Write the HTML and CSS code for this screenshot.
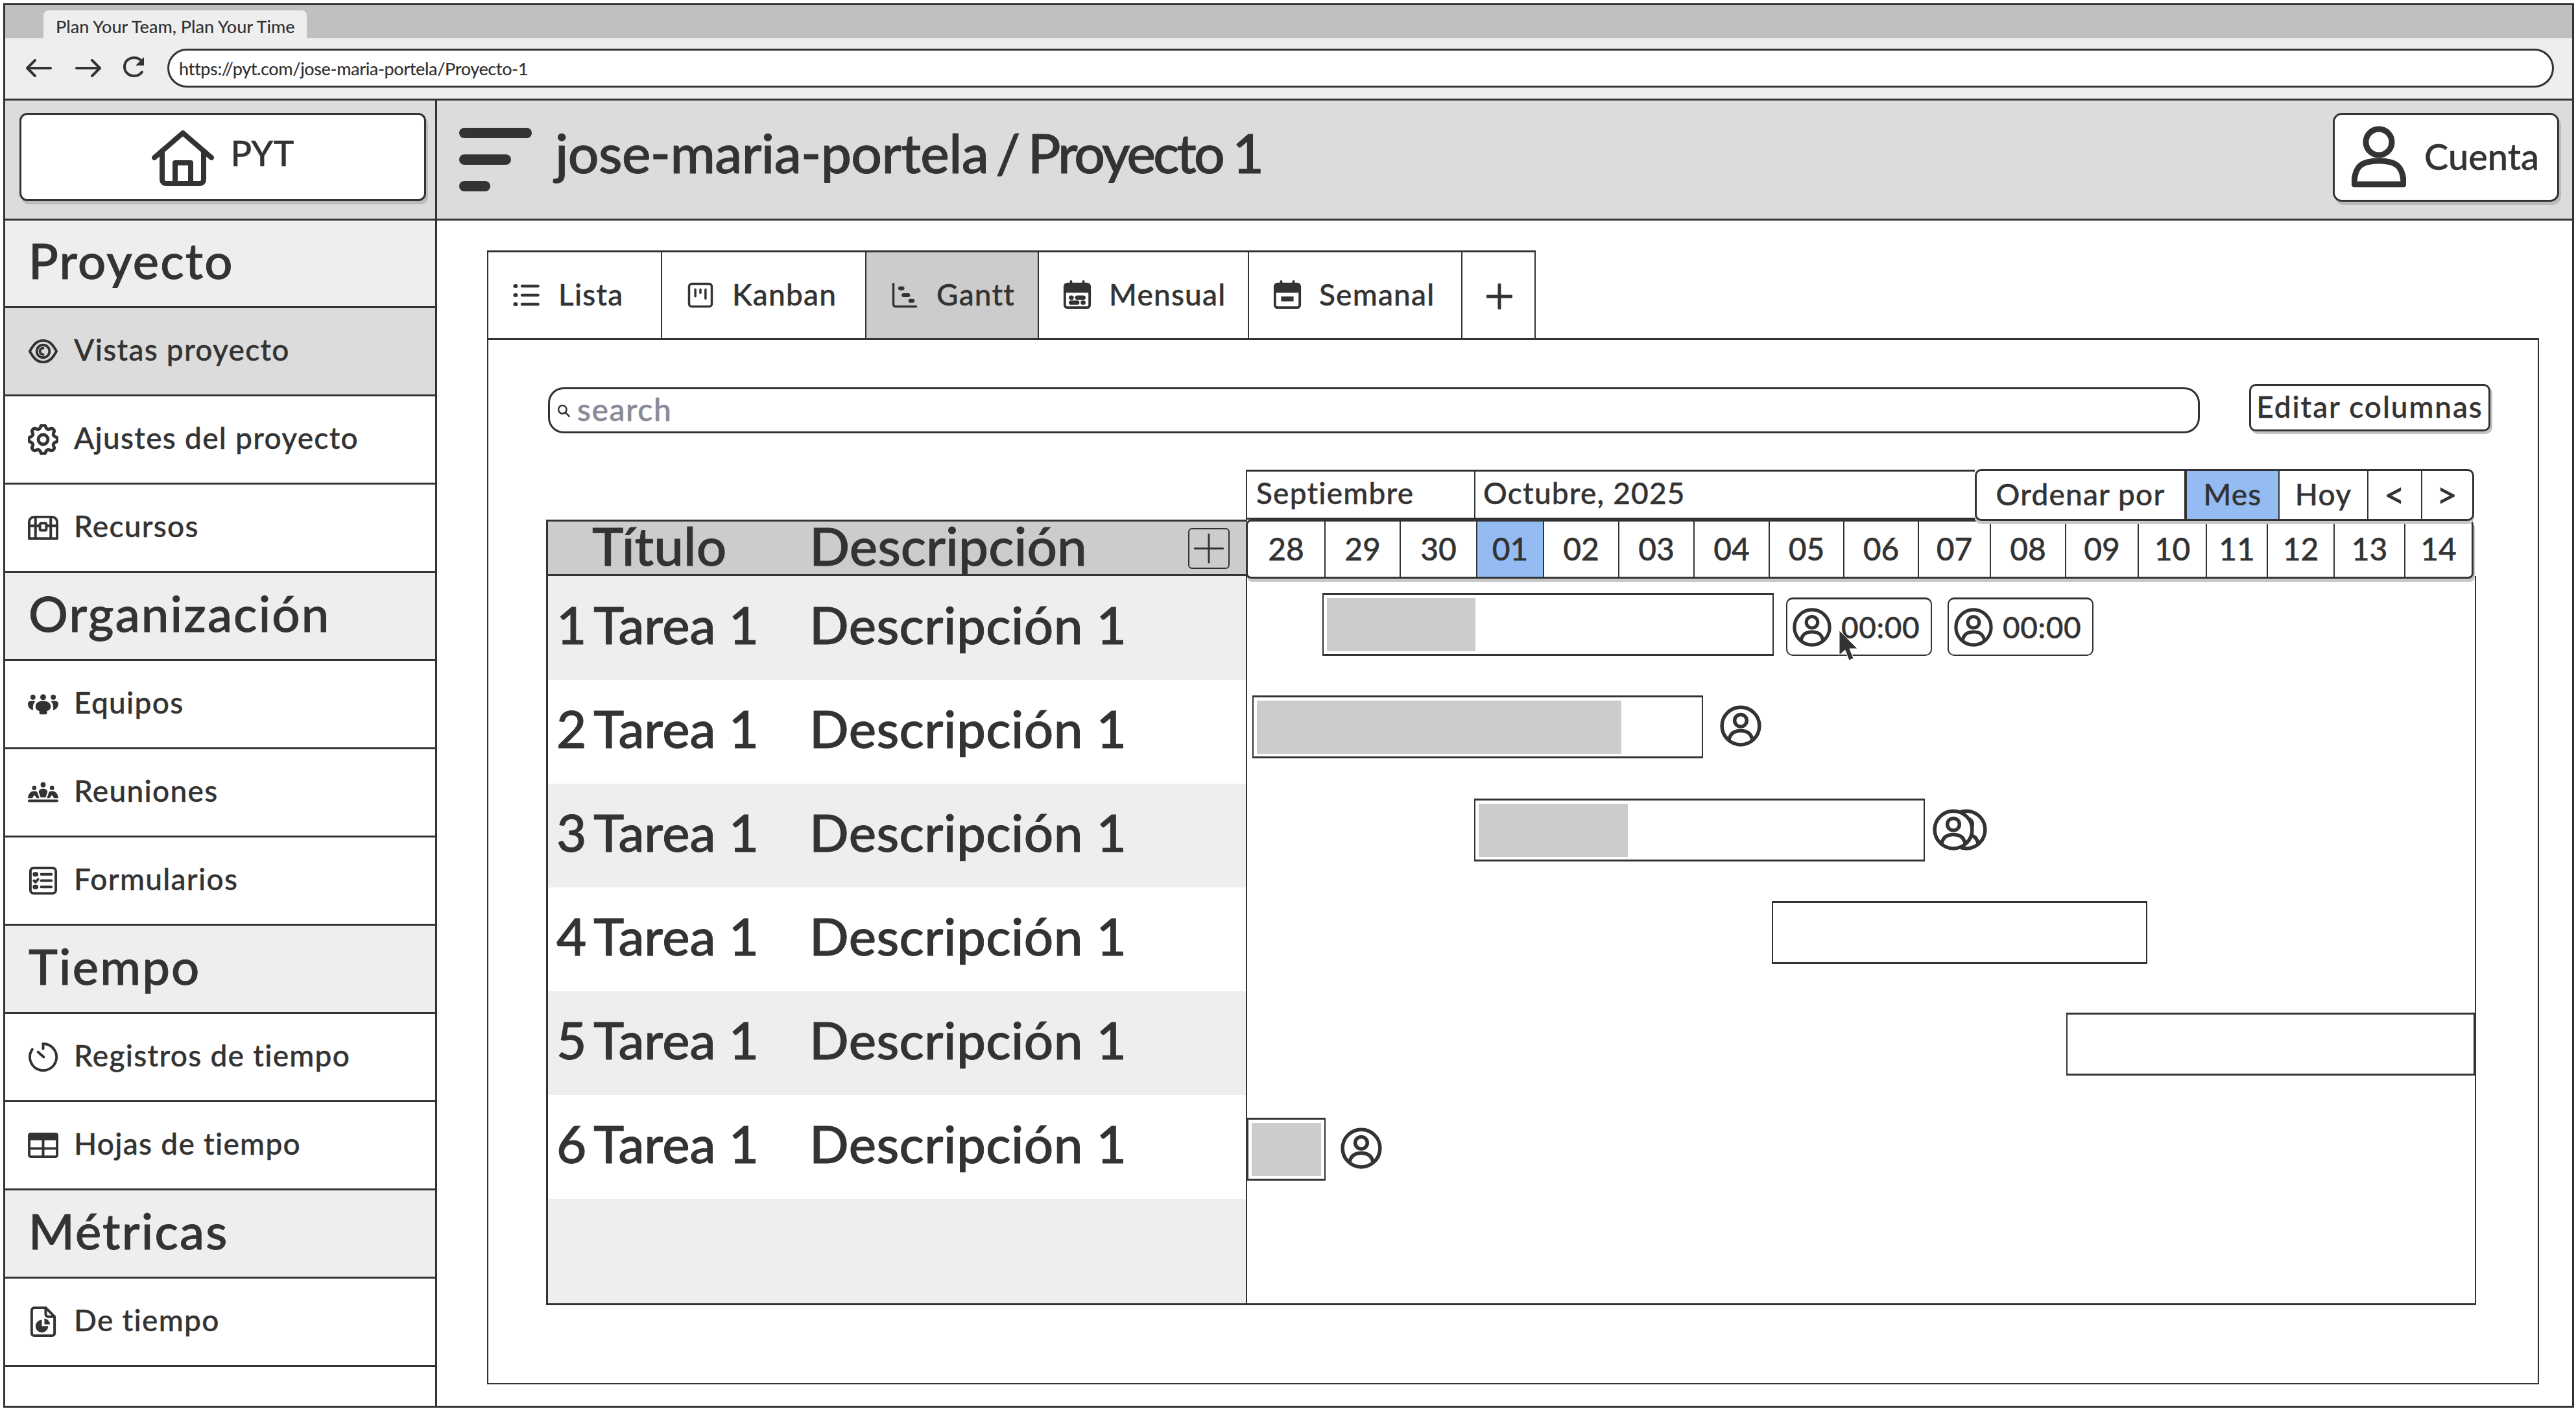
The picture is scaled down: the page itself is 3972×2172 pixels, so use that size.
FILE: index.html
```html
<!DOCTYPE html>
<html lang="es">
<head>
<meta charset="utf-8">
<title>Plan Your Team, Plan Your Time</title>
<link rel="stylesheet" href="styles.css">
</head>
<body>
<svg class="defs" width="0" height="0" aria-hidden="true">
  <symbol id="i-eye" viewBox="0 0 24 24"><path d="M1.5 12C5 5.5 8 3.5 12 3.5s7 2 10.500 8.500c-3.500 6.500-6.500 8.500-10.500 8.500S5 18.500 1.500 12z"/><circle cx="12" cy="12" r="5"/><path d="M12 9.500a2.500 2.500 0 0 0 0 5"/></symbol>
  <symbol id="i-gear" viewBox="2.500 2.500 19 19"><path d="M10.325 4.317c.426-1.756 2.924-1.756 3.35 0a1.724 1.724 0 0 0 2.573 1.066c1.543-.94 3.31.826 2.37 2.37a1.724 1.724 0 0 0 1.065 2.572c1.756.426 1.756 2.924 0 3.35a1.724 1.724 0 0 0-1.066 2.573c.94 1.543-.826 3.31-2.37 2.37a1.724 1.724 0 0 0-2.572 1.065c-.426 1.756-2.924 1.756-3.35 0a1.724 1.724 0 0 0-2.573-1.066c-1.543.94-3.31-.826-2.37-2.37a1.724 1.724 0 0 0-1.065-2.572c-1.756-.426-1.756-2.924 0-3.35a1.724 1.724 0 0 0 1.066-2.573c-.94-1.543.826-3.31 2.37-2.37.996.608 2.296.07 2.572-1.065z"/><circle cx="12" cy="12" r="3"/></symbol>
  <symbol id="i-chest" viewBox="0 0 24 19"><path d="M1 18V5a4 4 0 0 1 4-4h14a4 4 0 0 1 4 4v13zM1 8h8M15 8h8M6 1.500V18M18 1.500V18"/><rect x="9.500" y="6" width="5" height="5.500" rx="1"/></symbol>
  <symbol id="i-team" viewBox="0 0 24 16"><g class="solid"><circle cx="4" cy="2.500" r="2"/><circle cx="12" cy="2.500" r="2.300"/><circle cx="20" cy="2.500" r="2"/><path d="M0 7.500C0 6 1.500 5.500 3.500 5.500c1 0 1.800.2 2.300.5C4.500 7 4 8.500 4 11c0 .8.100 1.300.300 1.700C1.500 12.500 0 10 0 7.500zM24 7.500C24 6 22.500 5.500 20.500 5.500c-1 0-1.800.2-2.300.5 1.300 1 1.800 2.500 1.800 5 0 .8-.1 1.300-.3 1.700 2.800-.2 4.300-2.700 4.300-5.200zM6 10c0-3 2.500-4.500 6-4.500s6 1.500 6 4.500c0 2-1.500 3-3 3.300V15a1 1 0 0 1-1 1h-4a1 1 0 0 1-1-1v-1.700C7.500 13 6 12 6 10z"/></g></symbol>
  <symbol id="i-meet" viewBox="0 0 24 16"><g class="solid"><circle cx="12" cy="2" r="2"/><circle cx="5" cy="4.500" r="1.700"/><circle cx="19" cy="4.500" r="1.700"/><path d="M8.500 7.500C9 5.500 10.500 5 12 5s3 .5 3.500 2.500L14 12h-4zM0 12.500C.5 8.500 2.500 7 5 7c1 0 2 .3 2.500 1L9 12.500H7L5 10l-1.500 2.500zM24 12.500C23.500 8.500 21.500 7 19 7c-1 0-2 .3-2.500 1L15 12.500h2l2-2.500 1.500 2.500z"/><rect x="0" y="13.600" width="24" height="2" rx="1"/></g></symbol>
  <symbol id="i-form" viewBox="0 0 24 24"><rect x="2" y="2" width="20" height="20" rx="2.500"/><path d="M10.500 7h8M10.500 12h8M10.500 17h8"/><path d="M5.500 7h1M5.500 17h1" class="thick"/><path d="M4.800 12l1.200 1.200 2-2.200"/></symbol>
  <symbol id="i-timer" viewBox="0 0 24 24"><path d="M12 1.500a10.500 10.500 0 1 1-8.500 4.400"/><path d="M12 1.500v4M8 8l4.500 4"/></symbol>
  <symbol id="i-table" viewBox="0 0 24 20"><path class="solid" d="M2.500 0h19A2.500 2.500 0 0 1 24 2.500V6H0V2.500A2.500 2.500 0 0 1 2.500 0z"/><rect x="1" y="1" width="22" height="18" rx="1.500"/><path d="M1 12.500h22M12 5v14"/></symbol>
  <symbol id="i-doc" viewBox="0 0 20 24"><path d="M3 1h9l7 7v13a2 2 0 0 1-2 2H3a2 2 0 0 1-2-2V3a2 2 0 0 1 2-2z"/><path d="M12 1v5a2 2 0 0 0 2 2h5"/><path class="solid" d="M9 10.500v5h5a5 5 0 1 1-5-5zM11 9.500a5 5 0 0 1 4.500 4.500H11z"/></symbol>
  <symbol id="i-list" viewBox="0 0 24 24"><path class="thick" d="M2 4h.5M2 12h.5M2 20h.5"/><path class="mid" d="M8 4h14M8 12h14M8 20h14"/></symbol>
  <symbol id="i-kanban" viewBox="0 0 24 24"><rect x="2" y="2" width="20" height="20" rx="2.500"/><path d="M7.500 7v6M12 7v3M16.500 7v8"/></symbol>
  <symbol id="i-gantt" viewBox="0 0 24 24"><path d="M2 2v18a2 2 0 0 0 2 2h18"/><path class="thick" d="M8 6h2M11 12h4M17 17h2"/></symbol>
  <symbol id="i-month" viewBox="0 0 24 24"><path d="M7 1v4M17 1v4"/><path class="solid" d="M4 3h16a2 2 0 0 1 2 2v5H2V5a2 2 0 0 1 2-2z"/><rect x="2" y="3" width="20" height="19" rx="2"/><path class="thick" d="M7 14h.5M12 14h5M7 18h5M16.500 18h.5"/></symbol>
  <symbol id="i-week" viewBox="0 0 24 24"><path d="M7 1v4M17 1v4"/><path class="solid" d="M4 3h16a2 2 0 0 1 2 2v5H2V5a2 2 0 0 1 2-2zM7 13h10v4H7z"/><rect x="2" y="3" width="20" height="19" rx="2"/></symbol>
  <symbol id="i-user" viewBox="0 0 24 24"><circle class="white" cx="12" cy="12" r="10.500"/><circle cx="12" cy="9" r="3.400"/><path d="M5.500 19.500c.7-3.300 3-4.800 6.500-4.800s5.800 1.500 6.500 4.800"/></symbol>
  <symbol id="i-home" viewBox="0 0 96 86"><path class="w7" d="M4 42 48 4l44 38"/><path class="w7" d="M16 32v44a6 6 0 0 0 6 6h52a6 6 0 0 0 6-6V32"/><path class="w7" d="M36 82V50h24v32"/></symbol>
  <symbol id="i-account" viewBox="0 0 84 96"><ellipse class="w8" cx="42" cy="25" rx="20" ry="20"/><path class="w8" d="M4 90c0-30 14-36 38-36s38 6 38 36z"/></symbol>
</svg>

<div class="window">
  <div class="tabstrip"><div class="browser-tab">Plan Your Team, Plan Your Time</div></div>

  <div class="toolbar">
    <svg class="nav-ic" viewBox="0 0 40 28"><path d="M38 14H3M14 2 2 14l12 12"/></svg>
    <svg class="nav-ic" viewBox="0 0 40 28"><path d="M2 14h35M26 2l12 12-12 12"/></svg>
    <svg class="nav-ic nav-reload" viewBox="0 0 35 34"><path d="M29 8C26 4 22 3 18 3 9 3 3 9 3 17s6 14 15 14c5 0 9-2 12-6"/><path class="solid" d="M33 2v13H20z"/></svg>
    <div class="url">https://pyt.com/jose-maria-portela/Proyecto-1</div>
  </div>

  <header class="topbar">
    <div class="brand-cell">
      <div class="brand"><svg class="home-ic"><use href="#i-home"/></svg><span>PYT</span></div>
    </div>
    <div class="title-cell">
      <div class="burger"><i class="b1"></i><i class="b2"></i><i class="b3"></i></div>
      <h1><span class="crumb-a">jose-maria-portela</span> <span class="crumb-s">/</span> <span class="crumb-b">Proyecto 1</span></h1>
      <div class="account"><svg class="account-ic"><use href="#i-account"/></svg><span>Cuenta</span></div>
    </div>
  </header>

  <div class="body">
    <nav class="sidebar">
      <div class="sec sec-first">Proyecto</div>
      <div class="item active"><svg class="ic"><use href="#i-eye"/></svg>Vistas proyecto</div>
      <div class="item"><svg class="ic"><use href="#i-gear"/></svg>Ajustes del proyecto</div>
      <div class="item"><svg class="ic"><use href="#i-chest"/></svg>Recursos</div>
      <div class="sec">Organización</div>
      <div class="item"><svg class="ic"><use href="#i-team"/></svg>Equipos</div>
      <div class="item"><svg class="ic"><use href="#i-meet"/></svg>Reuniones</div>
      <div class="item"><svg class="ic"><use href="#i-form"/></svg>Formularios</div>
      <div class="sec">Tiempo</div>
      <div class="item"><svg class="ic"><use href="#i-timer"/></svg>Registros de tiempo</div>
      <div class="item"><svg class="ic"><use href="#i-table"/></svg>Hojas de tiempo</div>
      <div class="sec">Métricas</div>
      <div class="item"><svg class="ic"><use href="#i-doc"/></svg>De tiempo</div>
    </nav>

    <main class="content">
      <div class="panel">
        <div class="tabs">
          <div class="tab t-lista"><svg class="tab-ic"><use href="#i-list"/></svg>Lista</div>
          <div class="tab t-kanban"><svg class="tab-ic"><use href="#i-kanban"/></svg>Kanban</div>
          <div class="tab t-gantt on"><svg class="tab-ic"><use href="#i-gantt"/></svg>Gantt</div>
          <div class="tab t-mensual"><svg class="tab-ic tall"><use href="#i-month"/></svg>Mensual</div>
          <div class="tab t-semanal"><svg class="tab-ic tall"><use href="#i-week"/></svg>Semanal</div>
          <div class="tab t-plus"><svg class="plus-ic" viewBox="0 0 40 40"><path d="M20 2v36M2 20h36"/></svg></div>
        </div>

        <div class="panel-body">
          <div class="toolrow">
            <div class="search"><svg class="search-ic" viewBox="0 0 24 24"><circle cx="10" cy="10" r="7.500"/><path d="m15.500 15.500 7 7"/></svg><span>search</span></div>
            <div class="edit-btn">Editar columnas</div>
          </div>

          <div class="gantt">
            <div class="table">
              <div class="thead">
                <span class="c-title">Título</span><span class="c-desc">Descripción</span>
                <div class="add-col"><svg viewBox="0 0 30 30"><path d="M15 4v22M4 15h22"/></svg></div>
              </div>
              <div class="row alt"><span class="c-num">1</span><span class="c-title">Tarea 1</span><span class="c-desc">Descripción 1</span></div>
              <div class="row"><span class="c-num">2</span><span class="c-title">Tarea 1</span><span class="c-desc">Descripción 1</span></div>
              <div class="row alt"><span class="c-num">3</span><span class="c-title">Tarea 1</span><span class="c-desc">Descripción 1</span></div>
              <div class="row"><span class="c-num">4</span><span class="c-title">Tarea 1</span><span class="c-desc">Descripción 1</span></div>
              <div class="row alt"><span class="c-num">5</span><span class="c-title">Tarea 1</span><span class="c-desc">Descripción 1</span></div>
              <div class="row"><span class="c-num">6</span><span class="c-title">Tarea 1</span><span class="c-desc">Descripción 1</span></div>
              <div class="row alt last"></div>
            </div>

            <div class="timeline">
              <div class="months">
                <div class="m-sept">Septiembre</div>
                <div class="m-oct">Octubre, 2025</div>
                <div class="sorter">
                  <div class="s-order">Ordenar por</div>
                  <div class="s-mes">Mes</div>
                  <div class="s-hoy">Hoy</div>
                  <div class="s-prev">&lt;</div>
                  <div class="s-next">&gt;</div>
                </div>
              </div>
              <div class="days">
                <div>28</div><div>29</div><div>30</div><div class="today">01</div><div>02</div><div>03</div><div>04</div><div>05</div><div>06</div><div>07</div><div>08</div><div>09</div><div>10</div><div>11</div><div>12</div><div>13</div><div>14</div>
              </div>
              <div class="chart">
                <div class="lane lane1">
                  <div class="bar bar1"><i class="fill fill1"></i></div>
                  <div class="chip"><svg class="av"><use href="#i-user"/></svg>00:00
                    <svg class="cursor" viewBox="0 0 32 48"><path d="M2 0v38l9-8 6 16 7-3-6-15h12z"/></svg>
                  </div>
                  <div class="chip"><svg class="av"><use href="#i-user"/></svg>00:00</div>
                </div>
                <div class="lane lane2">
                  <div class="bar bar2"><i class="fill fill2"></i></div>
                  <svg class="av av-free"><use href="#i-user"/></svg>
                </div>
                <div class="lane lane3">
                  <div class="bar bar3"><i class="fill fill3"></i></div>
                  <div class="av-stack"><svg class="av av-front"><use href="#i-user"/></svg><svg class="av av-back"><use href="#i-user"/></svg></div>
                </div>
                <div class="lane lane4"><div class="bar bar4"></div></div>
                <div class="lane lane5"><div class="bar bar5"></div></div>
                <div class="lane lane6">
                  <div class="bar bar6"><i class="fill fill6"></i></div>
                  <svg class="av av-free"><use href="#i-user"/></svg>
                </div>
              </div>
            </div>
          </div>
        </div>
      </div>
    </main>
  </div>
</div>
</body>
</html>
```

FILE: styles.css
```css
* { box-sizing: border-box; }
html, body { margin: 0; padding: 0; background: #fff; }
body { font-family: Lato, "Open Sans", sans-serif; font-weight: 500; color: #333; width: 3972px; height: 2172px; overflow: hidden; -webkit-text-stroke: .4px #333; }
.defs { position: absolute; }
svg { fill: none; stroke: #333; stroke-linecap: round; stroke-linejoin: round; display: block; flex: none; }
symbol path, symbol circle, symbol rect, symbol ellipse { stroke-width: 2; }
symbol .solid, .solid { fill: #333; stroke: none; }
symbol .thick { stroke-width: 3.5; }
symbol .mid { stroke-width: 2.600; }
symbol .white { fill: #fff; }
symbol .w7 { stroke-width: 8; }
symbol .w8 { stroke-width: 9; }

.window { margin: 5px 3px 0 5px; height: 2165px; border: 3px solid #333; overflow: hidden; background: #fff; }

.tabstrip { height: 51px; background: #c0c0c0; padding: 8px 0 0 59px; }
.browser-tab { width: 406px; height: 43px; background: #eee; border-radius: 8px 8px 0 0; font-size: 27px; line-height: 50px; padding-left: 19px; white-space: nowrap; -webkit-text-stroke: 0; }

.toolbar { height: 96px; background: #eee; border-bottom: 3px solid #333; display: flex; align-items: center; padding: 0 28px 2px 32px; }
.nav-ic { width: 40px; height: 28px; margin-right: 36px; }
.nav-ic path { stroke-width: 4; }
.nav-ic .solid { stroke: none; }
.nav-reload { width: 35px; height: 34px; margin: -3px 34px 0 -3px; }
.url { flex: 1; height: 60px; background: #fff; border: 3px solid #333; border-radius: 30px; font-size: 27px; letter-spacing: -.4px; line-height: 56px; padding-left: 15px; -webkit-text-stroke: 0; }

.topbar { height: 185px; background: #dcdcdc; border-bottom: 3px solid #333; display: flex; }
.brand-cell { width: 666px; border-right: 3px solid #333; padding: 19px 0 0 22px; }
.brand { width: 627px; height: 136px; background: #fff; border: 3px solid #333; border-radius: 12px; box-shadow: 3px 5px 0 #bcbcbc; display: flex; align-items: center; justify-content: center; gap: 26px; font-size: 54px; }
.brand span { margin-top: -14px; }
.home-ic { width: 96px; height: 86px; margin-top: 4px; }

.title-cell { flex: 1; display: flex; align-items: center; padding: 0 20px 0 34px; }
.burger { width: 112px; display: flex; flex-direction: column; gap: 25px; margin-right: 36px; }
.burger i { display: block; height: 16px; background: #333; border-radius: 8px; }
.b1 { width: 112px; } .b2 { width: 80px; } .b3 { width: 48px; }
h1 { margin: -24px 0 0; font-size: 84px; font-weight: 500; flex: 1; white-space: nowrap; -webkit-text-stroke: 1px #333; word-spacing: -10px; }
.crumb-a { letter-spacing: -.6px; }
.crumb-b { letter-spacing: -3.800px; word-spacing: -2px; }
.account { width: 349px; height: 137px; margin-top: -8px; background: #fff; border: 3px solid #333; border-radius: 14px; box-shadow: 3px 5px 0 #bcbcbc; display: flex; align-items: center; font-size: 56px; padding-left: 26px; gap: 28px; }
.account span { margin-bottom: 4px; }
.account-ic { width: 84px; height: 96px; }

.body { display: flex; height: 1827px; }
.sidebar { width: 666px; border-right: 3px solid #333; display: grid; grid-template-rows: 135px; grid-auto-rows: 136px; align-content: start; }
.sec, .item { border-bottom: 3px solid #333; display: flex; align-items: center; white-space: nowrap; }
.sec { background: #eee; font-size: 76px; letter-spacing: 2.200px; padding: 0 0 11px 36px; -webkit-text-stroke: .9px #333; }
.item { font-size: 46px; letter-spacing: 1.300px; padding: 0 0 6px 35px; gap: 24px; }
.item.active { background: #dcdcdc; }
.ic { width: 47px; height: 47px; margin-top: 6px; }

.content { flex: 1; padding: 46px 51px 0 77px; }
.panel { height: 1748px; display: flex; flex-direction: column; }
.tabs { height: 138px; display: flex; border-bottom: 3px solid #333; border-left: 2px solid #333; }
.tab { border-top: 3px solid #333; border-right: 2px solid #333; display: flex; align-items: center; gap: 26px; padding: 0 0 4px 36px; font-size: 46px; letter-spacing: 1.200px; white-space: nowrap; }
.t-lista { width: 268px; } .t-kanban { width: 315px; } .t-gantt { width: 266px; } .t-mensual { width: 324px; } .t-semanal { width: 329px; } .t-plus { width: 113px; padding: 4px 0 0 37px; }
.tab.on { background: #ccc; }
.tab-ic { width: 46px; height: 42px; margin-top: 4px; }
.tab-ic.tall { height: 48px; }
.plus-ic { width: 40px; height: 40px; }
.plus-ic path { stroke-width: 5; }

.panel-body { flex: 1; border: 2px solid #333; border-top: 0; padding: 73px 0 0 89px; }
.toolrow { display: flex; align-items: center; gap: 76px; height: 71px; margin-left: 3px; }
.search { width: 2547px; height: 71px; border: 3px solid #333; border-radius: 24px; display: flex; align-items: center; padding: 0 0 4px 11px; gap: 11px; font-size: 48px; letter-spacing: 1.600px; color: #8a8a96; -webkit-text-stroke: .5px #8a8a96; }
.search-ic { width: 20px; height: 22px; margin-top: 4px; }
.search-ic circle, .search-ic path { stroke-width: 3; }
.edit-btn { width: 372px; height: 73px; margin-bottom: 8px; border: 3px solid #333; border-radius: 10px; box-shadow: 3px 4px 0 #c4c4c4; font-size: 46px; letter-spacing: 1.900px; display: flex; align-items: center; justify-content: center; padding-bottom: 4px; white-space: nowrap; }

.gantt { display: grid; grid-template-columns: 1081px 1897px; margin-top: 56px; }

.table { margin-top: 77px; height: 1211px; border-left: 3px solid #333; border-bottom: 3px solid #333; -webkit-text-stroke: .9px #333; }
.thead { height: 87px; background: #ccc; border-top: 3px solid #333; border-bottom: 3px solid #333; display: flex; align-items: center; font-size: 82px; padding-bottom: 9px; position: relative; white-space: nowrap; }
.thead .c-title { margin-left: 68px; width: 335px; }
.add-col { position: absolute; left: 987px; top: 10px; width: 64px; height: 63px; border: 2px solid #333; border-radius: 6px; -webkit-text-stroke: 0; }
.add-col svg { width: 60px; height: 59px; }
.add-col path { stroke-width: 1.500; }
.row { height: 160px; display: flex; align-items: center; font-size: 80px; padding-bottom: 12px; white-space: nowrap; }
.row.alt { background: #eee; }
.row.last { height: 161px; }
.c-num { width: 70px; padding-left: 13px; }
.c-title { width: 333px; }
.row .c-desc { letter-spacing: .4px; }

.timeline { position: relative; left: -2px; }
.months { height: 77px; display: flex; font-size: 46px; letter-spacing: 1.200px; border-left: 2px solid #333; }
.months > div { white-space: nowrap; }
.m-sept { width: 352px; border-top: 3px solid #333; border-bottom: 3px solid #333; border-right: 2px solid #333; padding-left: 14px; line-height: 66px; }
.m-oct { width: 770px; border-top: 3px solid #333; border-bottom: 3px solid #333; padding-left: 12px; line-height: 66px; }
.sorter { width: 770px; flex: none; height: 80px; margin-top: -1px; display: flex; background: #fff; border: 3px solid #333; border-radius: 10px; box-shadow: 0 5px 0 #c8c8c8; position: relative; z-index: 2; }
.sorter > div { display: flex; align-items: center; justify-content: center; border-right: 2px solid #333; padding-bottom: 4px; }
.s-order { width: 322px; } .s-mes { width: 145px; background: #94bbf2; border-left: 2px solid #333; } .s-hoy { width: 137px; } .s-prev { width: 83px; font-size: 56px; }
.sorter > .s-next { flex: 1; border-right: 0; font-size: 56px; }

.days { height: 91px; width: 1893px; display: grid; grid-template-columns: 120px 116px 118px 103px 116px 116px 116px 115px 115px 111px 116px 112px 105px 94px 103px 109px 1fr; background: #fff; border: 3px solid #333; border-radius: 8px; box-shadow: 2px 5px 0 #c8c8c8; font-size: 48px; position: relative; z-index: 1; }
.days > div { display: flex; align-items: center; justify-content: center; border-right: 2px solid #333; padding-bottom: 2px; }
.days > div:last-child { border-right: 0; }
.days .today { background: #94bbf2; }

.chart { margin-top: -4px; height: 1124px; border-left: 2px solid #333; border-right: 2px solid #333; border-bottom: 3px solid #333; display: flex; flex-direction: column; }
.lane { display: flex; align-items: flex-start; }
.lane1 { height: 160px; padding: 26px 0 0 116px; }
.lane2 { height: 159px; padding: 24px 0 0 8px; }
.lane3 { height: 160px; padding: 24px 0 0 350px; }
.lane4 { height: 162px; padding: 22px 0 0 809px; }
.lane5 { height: 157px; padding: 32px 0 0 1263px; }
.lane6 { height: 162px; padding: 37px 0 0 0; }

.bar { height: 97px; border: 3px solid #333; border-left-width: 2px; border-right-width: 2px; padding: 5px; background: #fff; flex: none; }
.bar1 { width: 696px; } .bar2 { width: 695px; } .bar3 { width: 695px; } .bar4 { width: 579px; } .bar5 { width: 630px; } .bar6 { width: 121px; }
.fill { display: block; height: 82px; background: #ccc; }
.fill1 { width: 229px; } .fill2 { width: 562px; } .fill3 { width: 230px; } .fill6 { width: 107px; }

.chip { width: 225px; height: 90px; margin: 7px 0 0 19px; border: 2px solid #333; border-top-width: 3px; border-radius: 10px; display: flex; align-items: center; gap: 14px; padding: 0 0 0 7px; font-size: 46px; letter-spacing: .6px; position: relative; }
.chip + .chip { margin-left: 24px; }
.av { width: 66px; height: 66px; }
.chip .av { width: 62px; height: 66px; }
.av-free { margin: 14px 0 0 25px; }
.cursor { position: absolute; left: 78px; top: 48px; width: 32px; height: 48px; }
.cursor path { fill: #333; stroke: #fff; stroke-width: 1; }
.av-stack { display: flex; margin: 15px 0 0 11px; }
.av-front { position: relative; z-index: 1; }
.av-back { margin-left: -46px; }
.lane6 .av-free { margin-left: 22px; }
```
